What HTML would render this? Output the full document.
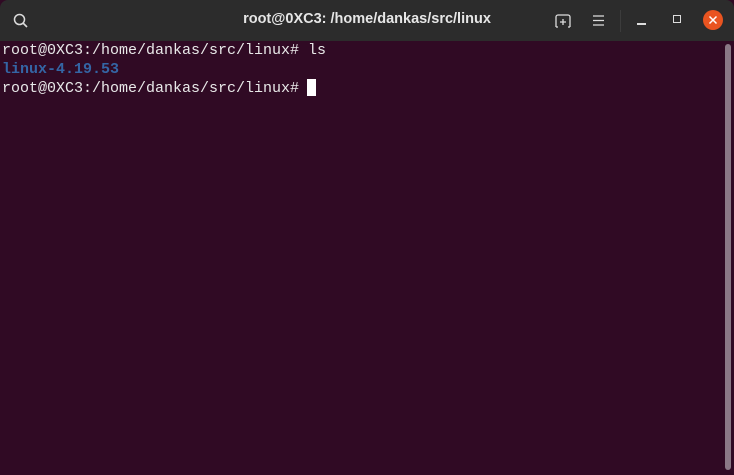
<!DOCTYPE html>
<html><head><meta charset="utf-8"><style>
html,body{margin:0;padding:0;width:734px;height:475px;overflow:hidden;background:#300a24}
.tb{position:absolute;left:0;top:0;width:734px;height:41px;background:#2c2c2c;border-radius:8px 8px 0 0}
.title{position:absolute;left:0;width:734px;top:11px;text-align:center;color:#e6e6e6;font:bold 14.5px "Liberation Sans",sans-serif}
.term{position:absolute;left:0;top:41px;width:734px;height:434px;background:#300a24}
.line{position:absolute;left:2px;font:15px/19px "Liberation Mono",monospace;color:#e8e8e8;white-space:pre}
.cur{position:absolute;left:307px;top:79px;width:9px;height:17px;background:#fff}
.sb{position:absolute;left:725px;top:44px;width:6px;height:426px;background:#8a7886;border-radius:3px}
.sep{position:absolute;left:620px;top:10px;width:1px;height:22px;background:#3c3c3c}
</style></head><body>
<div class="tb">
<svg style="position:absolute;left:13px;top:13px" width="16" height="16" viewBox="0 0 16 16"><circle cx="6.5" cy="6.5" r="5" fill="none" stroke="#ddd" stroke-width="1.5"/><line x1="10" y1="10" x2="14" y2="14" stroke="#ddd" stroke-width="1.6"/></svg>
<div class="title">root@0XC3: /home/dankas/src/linux</div>
<svg style="position:absolute;left:555px;top:14px" width="16" height="14" viewBox="0 0 16 14"><path d="M1 13V3a2 2 0 0 1 2-2h10a2 2 0 0 1 2 2v10M1 13h2M13 13h2M8 5v6M5 8h6" fill="none" stroke="#ddd" stroke-width="1.3"/></svg>
<svg style="position:absolute;left:593px;top:15px" width="12" height="11" viewBox="0 0 12 11"><path d="M0 1h11M0 5.5h11M0 10h11" stroke="#ddd" stroke-width="1.3"/></svg>
<div class="sep"></div>
<div style="position:absolute;left:637px;top:23px;width:9px;height:1.5px;background:#ddd"></div>
<div style="position:absolute;left:673px;top:15px;width:6px;height:6px;border:1.3px solid #ddd"></div>
<svg style="position:absolute;left:703px;top:10px" width="20" height="20" viewBox="0 0 20 20"><circle cx="10" cy="10" r="10" fill="#e95420"/><path d="M6.5 6.5l7 7M13.5 6.5l-7 7" stroke="#fff" stroke-width="1.5"/></svg>
</div>
<div class="term"></div>
<div class="line" style="top:41px">root@0XC3:/home/dankas/src/linux# ls</div>
<div class="line" style="top:60px;color:#3465a4;font-weight:bold">linux-4.19.53</div>
<div class="line" style="top:79px">root@0XC3:/home/dankas/src/linux# </div>
<div class="cur"></div>
<div class="sb"></div>
</body></html>
